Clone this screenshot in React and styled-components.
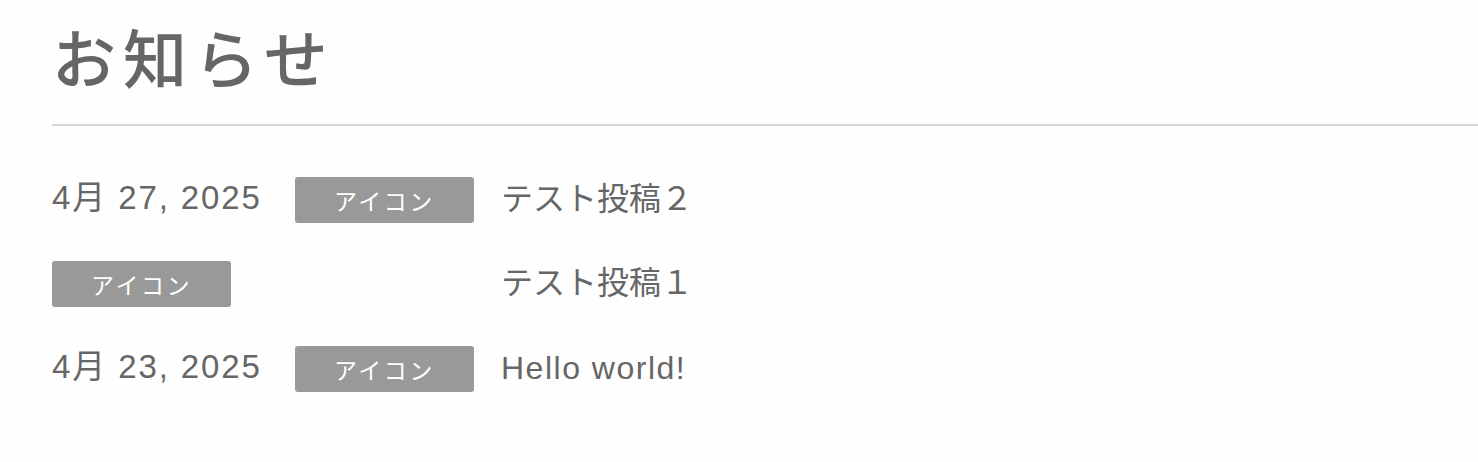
import React from "react";
import styled, { createGlobalStyle } from "styled-components";

const Global = createGlobalStyle`
  html, body { margin: 0; padding: 0; background: #fefefe; }
  body { font-family: "Liberation Sans", "Noto Sans CJK JP", sans-serif; color: #666; }
`;

const Page = styled.main`
  padding: 17px 0 0 52px;
`;

const Heading = styled.h1`
  margin: 0;
  padding-bottom: 30px;
  border-bottom: 2px solid #d6d6d6;
  font-family: "Noto Sans CJK JP", sans-serif;
  font-weight: 500;
  font-size: 64px;
  line-height: 1.2;
  letter-spacing: 7px;
  color: #666;
`;

const List = styled.ul`
  list-style: none;
  margin: 0;
  padding: 51px 0 0;
  display: flex;
  flex-direction: column;
  gap: 38.5px;
`;

const Row = styled.li`
  display: flex;
  align-items: center;
  height: 46px;
`;

const Meta = styled.div`
  width: 449px;
  flex: none;
  display: flex;
  align-items: center;
  gap: 33px;
`;

const DateText = styled.time`
  font-family: "Liberation Sans", "Noto Sans CJK JP", sans-serif;
  font-size: 33px;
  line-height: 42px;
  padding-bottom: 3px;
  letter-spacing: 1.9px;
  color: #666;
`;

const Tag = styled.span`
  display: inline-flex;
  align-items: center;
  justify-content: center;
  width: 179px;
  height: 46px;
  box-sizing: border-box;
  background: #999;
  border-radius: 3px;
  color: #fff;
  font-family: "Noto Sans CJK JP", sans-serif;
  font-size: 23px;
  letter-spacing: 2.5px;
`;

const Title = styled.a`
  font-family: "Liberation Sans", "Noto Sans CJK JP", sans-serif;
  font-size: 32px;
  line-height: 42px;
  padding-bottom: 2px;
  color: #666;
  text-decoration: none;
  letter-spacing: ${(p) => (p.$latin ? "1.5px" : "0px")};
`;

const posts = [
  { date: "4月 27, 2025", title: "テスト投稿２" },
  { date: null, title: "テスト投稿１" },
  { date: "4月 23, 2025", title: "Hello world!", latin: true },
];

export default function App() {
  return (
    <>
      <Global />
      <Page>
        <Heading>お知らせ</Heading>
        <List>
          {posts.map((p, i) => (
            <Row key={i}>
              <Meta>
                {p.date && <DateText>{p.date}</DateText>}
                <Tag>アイコン</Tag>
              </Meta>
              <Title href="#" $latin={p.latin}>
                {p.title}
              </Title>
            </Row>
          ))}
        </List>
      </Page>
    </>
  );
}
